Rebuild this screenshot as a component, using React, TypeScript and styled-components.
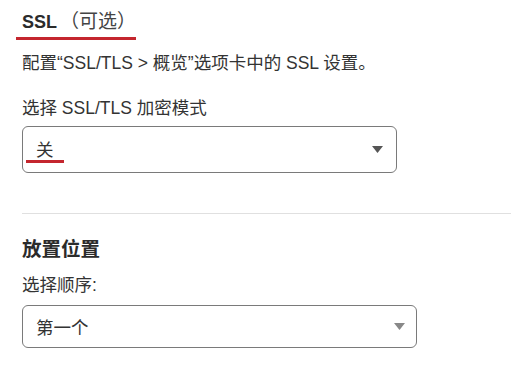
import React from "react";
import styled, { createGlobalStyle } from "styled-components";

const Global = createGlobalStyle`
  html, body { margin: 0; padding: 0; background: #fff; }
  body {
    font-family: "Liberation Sans", "Noto Sans CJK SC", sans-serif;
    color: #333;
  }
`;

const Page = styled.div`
  width: 511px;
  height: 372px;
  overflow: hidden;
  padding: 8px 0 0 22px;
  box-sizing: border-box;
`;

const Section = styled.section`
  display: flex;
  flex-direction: column;
  align-items: flex-start;
`;

const Title = styled.h2`
  margin: 0 0 0 -6px;
  padding: 0 0 1px 6px;
  font-size: 18px;
  line-height: 27px;
  font-weight: 700;
  color: #2b2b2b;
  border-bottom: 3px solid #c4262e;
`;

const Optional = styled.span`
  margin-left: 3px;
  font-weight: 400;
  font-size: 19px;
  color: #444;
`;

const Heading = styled.h3`
  margin: 22px 0 0;
  font-size: 19.5px;
  line-height: 26px;
  font-weight: 700;
  color: #2b2b2b;
`;

const Text = styled.p<{ $mt: number }>`
  margin: ${(p) => p.$mt}px 0 0;
  font-size: 17.5px;
  line-height: 22px;
  color: #333;
`;

const Select = styled.div<{ $w: number; $h: number; $mt: number; $caret: string; $pr: number }>`
  margin-top: ${(p) => p.$mt}px;
  width: ${(p) => p.$w}px;
  height: ${(p) => p.$h}px;
  box-sizing: border-box;
  border: 1px solid #7a7a7a;
  border-radius: 6px;
  display: flex;
  align-items: center;
  justify-content: space-between;
  padding: 0 ${(p) => p.$pr}px 0 13px;
  font-size: 17.5px;
  color: #333;
  svg { fill: ${(p) => p.$caret}; }
`;

const Marked = styled.span`
  display: inline-block;
  margin: 4px -10px 0;
  padding: 0 10px;
  line-height: 20px;
  border-bottom: 3px solid #c4262e;
`;

const Divider = styled.hr`
  margin: 40px 0 0;
  border: none;
  border-top: 1px solid #e0e0e0;
  width: 100%;
`;

const Caret = () => (
  <svg width="11" height="7" viewBox="0 0 11 7">
    <path d="M0 0 H11 L5.5 7 Z" />
  </svg>
);

export default function App() {
  return (
    <>
      <Global />
      <Page>
        <Section>
          <Title>
            SSL<Optional>（可选）</Optional>
          </Title>
          <Text $mt={12}>配置“SSL/TLS &gt; 概览”选项卡中的 SSL 设置。</Text>
          <Text $mt={23}>选择 SSL/TLS 加密模式</Text>
          <Select $w={375} $h={47} $mt={7} $caret="#555" $pr={13}>
            <Marked>关</Marked>
            <Caret />
          </Select>
        </Section>
        <Divider />
        <Section>
          <Heading>放置位置</Heading>
          <Text $mt={12}>选择顺序:</Text>
          <Select $w={395} $h={43} $mt={9} $caret="#888" $pr={11}>
            <span>第一个</span>
            <Caret />
          </Select>
        </Section>
      </Page>
    </>
  );
}
